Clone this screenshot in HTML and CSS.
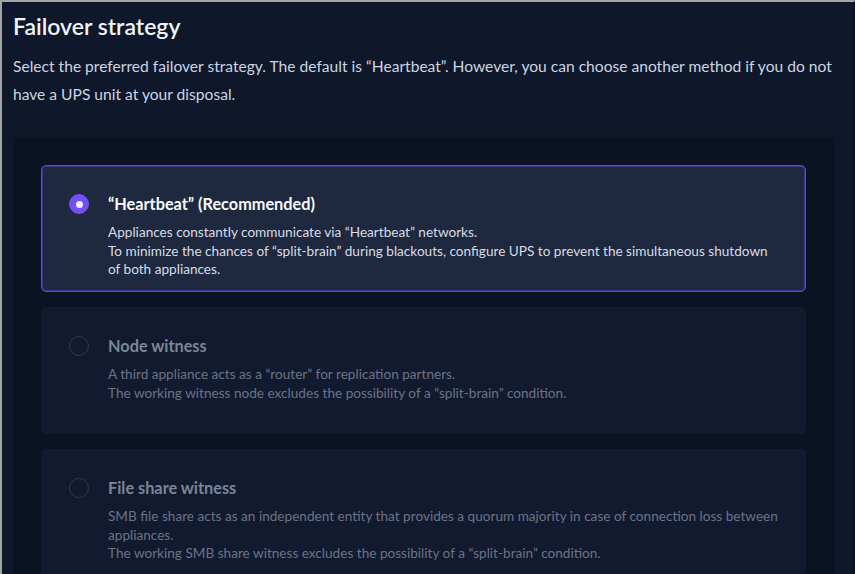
FILE: index.html
```html
<!DOCTYPE html>
<html lang="en">
<head>
<meta charset="utf-8">
<title>Failover strategy</title>
<link rel="stylesheet" href="styles.css">
</head>
<body>
<div class="frame">
  <h1 class="title">Failover strategy</h1>
  <p class="intro">Select the preferred failover strategy. The default is “Heartbeat”. However, you can choose another method if you do not have a UPS unit at your disposal.</p>
  <div class="panel">
    <div class="option selected">
      <span class="radio checked"></span>
      <div class="body">
        <div class="name">“Heartbeat” (Recommended)</div>
        <div class="desc">Appliances constantly communicate via “Heartbeat” networks.<br>To minimize the chances of “split-brain” during blackouts, configure UPS to prevent the simultaneous shutdown of both appliances.</div>
      </div>
    </div>
    <div class="option disabled">
      <span class="radio"></span>
      <div class="body">
        <div class="name">Node witness</div>
        <div class="desc">A third appliance acts as a “router” for replication partners.<br>The working witness node excludes the possibility of a “split-brain” condition.</div>
      </div>
    </div>
    <div class="option disabled">
      <span class="radio"></span>
      <div class="body">
        <div class="name">File share witness</div>
        <div class="desc">SMB file share acts as an independent entity that provides a quorum majority in case of connection loss between appliances.<br>The working SMB share witness excludes the possibility of a “split-brain” condition.</div>
      </div>
    </div>
  </div>
</div>
</body>
</html>
```

FILE: styles.css
```css
* { box-sizing: border-box; }
html, body {
  margin: 0;
  height: 100%;
  background: #0f172a;
  overflow: hidden;
}
body {
  font-family: "Lato", "Noto Sans", sans-serif;
}
.frame {
  height: 574px;
  overflow: hidden;
  border-top: 2px solid #a4a4a6;
  border-left: 2px solid #a4a4a6;
  border-right: 1px solid #0b1120;
  background: #0f172a;
  padding: 10px 19px 0 11px;
}
.title {
  margin: 0;
  font-size: 23px;
  line-height: 28px;
  font-weight: 600;
  color: #f1f5f9;
}
.intro {
  margin: 12px 0 0;
  font-size: 15.6px;
  line-height: 28px;
  color: #cbd5e1;
}
.panel {
  margin-top: 29px;
  background: #0b1222;
  border-radius: 4px;
  padding: 28px 29px 28px 28px;
  display: flex;
  flex-direction: column;
  gap: 15px;
}
.option {
  display: flex;
  align-items: flex-start;
  gap: 19px;
  min-height: 127px;
  padding: 27px 25px 12px 27px;
  border-radius: 5px;
  border: 1px solid transparent;
  background: #121a2f;
}
.option.selected {
  background: #1e293f;
  border-color: #6a3cff;
  box-shadow: inset 0 0 0 1px rgba(106, 60, 255, 0.45);
}
.radio {
  flex: none;
  width: 20px;
  height: 20px;
  margin-top: 1px;
  border-radius: 50%;
  border: 1.5px solid #2e374d;
  position: relative;
}
.radio.checked {
  background: #7350f5;
  border-color: #7350f5;
}
.radio.checked::after {
  content: "";
  position: absolute;
  left: 50%;
  top: 50%;
  width: 7px;
  height: 7px;
  margin: -3.5px 0 0 -3.5px;
  border-radius: 50%;
  background: #eef0ff;
}
.name {
  font-size: 16.3px;
  line-height: 22px;
  font-weight: 700;
  color: #f8fafc;
}
.desc {
  margin-top: 8px;
  font-size: 13.6px;
  line-height: 18.5px;
  color: #d6dce6;
}
.disabled .name { color: #7d8596; }
.disabled .desc { color: #6b7385; }
```
